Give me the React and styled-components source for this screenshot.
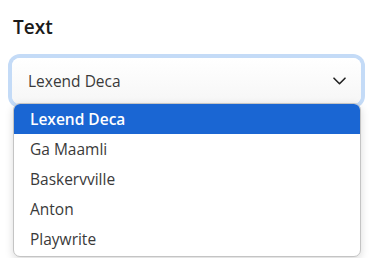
import React, { useState } from 'react'
import styled, { createGlobalStyle } from 'styled-components'

const GlobalStyle = createGlobalStyle`
  body {
    margin: 0;
    background: #fff;
    font-family: "Open Sans", "Liberation Sans", sans-serif;
  }
`

const Page = styled.div`
  padding: 16px 16px 0 12px;
  width: 377px;
  height: 258px;
  box-sizing: border-box;
`

const Label = styled.div`
  font-size: 19px;
  font-weight: 600;
  color: #1b1b1b;
  line-height: 22px;
  padding-left: 1px;
  margin-bottom: 20px;
`

const SelectWrap = styled.div`
  position: relative;
`

const SelectBox = styled.div`
  height: 46px;
  box-sizing: border-box;
  display: flex;
  align-items: center;
  justify-content: space-between;
  padding: 0 15px 0 16px;
  border-radius: 8px;
  background: linear-gradient(#ffffff, #f6f6f6);
  box-shadow: 0 0 0 4px #c4dbf7;
  font-size: 15.5px;
  color: #3a3a3a;
`

const Chevron = styled.svg`
  width: 13px;
  height: 8px;
`

const Menu = styled.ul`
  position: absolute;
  top: 45px;
  left: 1px;
  right: 0;
  margin: 0;
  padding: 0 0 2px;
  list-style: none;
  background: #fff;
  border: 1px solid #c4c4c4;
  border-radius: 7px;
  overflow: hidden;
  box-shadow: 0 3px 8px rgba(0, 0, 0, 0.15);
`

const Option = styled.li`
  height: 30px;
  display: flex;
  align-items: center;
  padding: 0 16px;
  font-size: 15.5px;
  color: ${p => (p.$active ? '#ffffff' : '#3a3a3a')};
  background: ${p => (p.$active ? '#1a66d3' : 'transparent')};
  font-weight: ${p => (p.$active ? 600 : 400)};
`

const fonts = ['Lexend Deca', 'Ga Maamli', 'Baskervville', 'Anton', 'Playwrite']

export default function App() {
  const [value] = useState('Lexend Deca')
  return (
    <Page>
      <GlobalStyle />
      <Label>Text</Label>
      <SelectWrap>
        <SelectBox>
          <span>{value}</span>
          <Chevron viewBox="0 0 13 8" fill="none">
            <path d="M1 1.2l5.5 5.5L12 1.2" stroke="#222" strokeWidth="1.6" strokeLinecap="round" strokeLinejoin="round" />
          </Chevron>
        </SelectBox>
        <Menu>
          {fonts.map(f => (
            <Option key={f} $active={f === value}>{f}</Option>
          ))}
        </Menu>
      </SelectWrap>
    </Page>
  )
}
